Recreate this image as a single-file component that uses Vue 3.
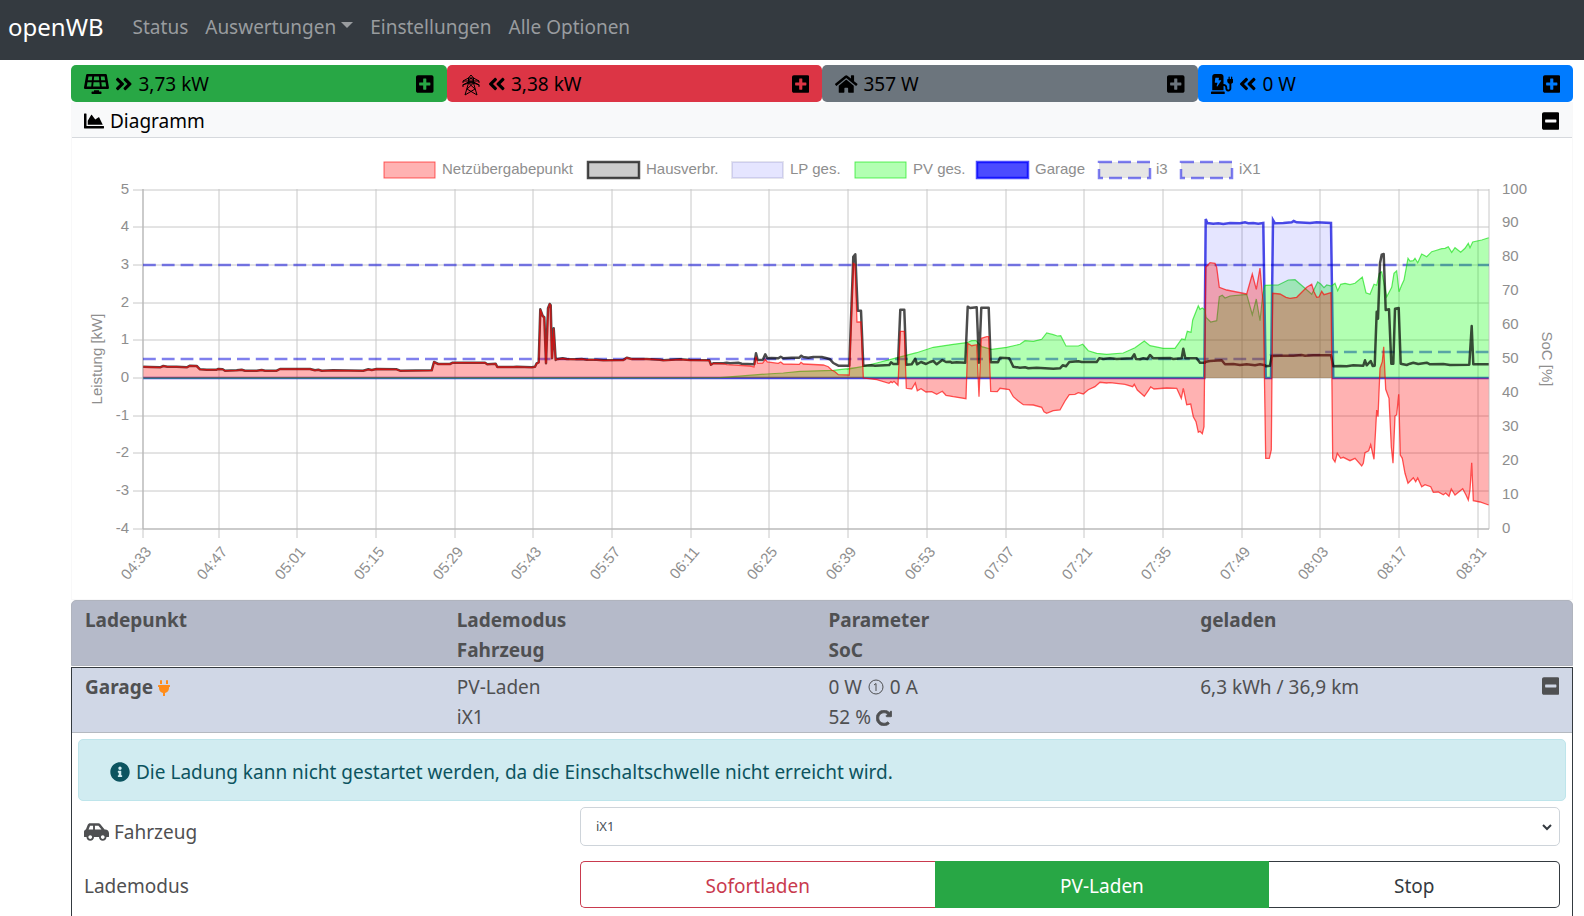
<script setup>
import { ref } from 'vue'

const vehicle = ref('iX1')
const mode = ref('pv')

const icons = {
  solar: [640, 'M431.98 448.01l-47.97.05V416h-128v32.21l-47.98.05c-8.82.01-15.97 7.16-15.98 15.99l-.05 31.73c-.01 8.85 7.17 16.03 16.02 16.02l223.96-.26c8.82-.01 15.97-7.16 15.98-15.98l.04-31.73c.01-8.85-7.17-16.03-16.02-16.02zM585.2 26.74C582.58 11.31 568.99 0 553.06 0H86.93C71 0 57.41 11.31 54.79 26.74-3.32 369.16.04 348.08.03 352c-.03 17.32 14.29 32 32.6 32h574.74c18.23 0 32.51-14.56 32.59-31.79.02-4.08 3.35 16.95-54.76-325.47zM259.83 64h120.33l9.77 96H250.06l9.77-96zm-75.17 256H71.09L90.1 208h105.97l-11.41 112zm16.16-160H98.24l16.29-96h96.19l-9.9 96zm32.82 160l11.4-112h149.91l11.4 112H233.64zm195.5-256h96.19l16.29 96H439.04l-9.9-96zm26.26 256l-11.4-112H549.9l19.01 112H455.34z'],
  chevrons: [448, 'M224.3 273l-136 136c-9.4 9.4-24.6 9.4-33.9 0l-22.6-22.6c-9.4-9.4-9.4-24.6 0-33.9l96.4-96.4-96.4-96.4c-9.4-9.4-9.4-24.6 0-33.9L54.3 103c9.4-9.4 24.6-9.4 33.9 0l136 136c9.5 9.4 9.5 24.6.1 34zm192-34l-136-136c-9.4-9.4-24.6-9.4-33.9 0l-22.6 22.6c-9.4 9.4-9.4 24.6 0 33.9l96.4 96.4-96.4 96.4c-9.4 9.4-9.4 24.6 0 33.9l22.6 22.6c9.4 9.4 24.6 9.4 33.9 0l136-136c9.4-9.2 9.4-24.4 0-33.8z'],
  plus: [448, 'M400 32H48C21.5 32 0 53.5 0 80v352c0 26.5 21.5 48 48 48h352c26.5 0 48-21.5 48-48V80c0-26.5-21.5-48-48-48zm-32 252c0 6.6-5.4 12-12 12h-92v92c0 6.6-5.4 12-12 12h-56c-6.6 0-12-5.4-12-12v-92H92c-6.6 0-12-5.4-12-12v-56c0-6.6 5.4-12 12-12h92v-92c0-6.6 5.4-12 12-12h56c6.6 0 12 5.4 12 12v92h92c6.6 0 12 5.4 12 12v56z'],
  minus: [448, 'M400 32H48C21.5 32 0 53.5 0 80v352c0 26.5 21.5 48 48 48h352c26.5 0 48-21.5 48-48V80c0-26.5-21.5-48-48-48zM92 296c-6.6 0-12-5.4-12-12v-56c0-6.6 5.4-12 12-12h264c6.6 0 12 5.4 12 12v56c0 6.6-5.4 12-12 12H92z'],
  home: [576, 'M280.37 148.26L96 300.11V464a16 16 0 0 0 16 16l112.06-.29a16 16 0 0 0 15.92-16V368a16 16 0 0 1 16-16h64a16 16 0 0 1 16 16v95.64a16 16 0 0 0 16 16.05L464 480a16 16 0 0 0 16-16V300L295.67 148.26a12.19 12.19 0 0 0-15.3 0zM571.6 251.47L488 182.56V44.05a12 12 0 0 0-12-12h-56a12 12 0 0 0-12 12v72.61L318.47 43a48 48 0 0 0-61 0L4.34 251.47a12 12 0 0 0-1.6 16.9l25.5 31A12 12 0 0 0 45.15 301l235.22-193.74a12.19 12.19 0 0 1 15.3 0L530.9 301a12 12 0 0 0 16.9-1.6l25.5-31a12 12 0 0 0-1.7-16.93z'],
  station: [576, 'M336 448H16c-8.84 0-16 7.16-16 16v32c0 8.84 7.16 16 16 16h320c8.84 0 16-7.16 16-16v-32c0-8.84-7.16-16-16-16zM544 128V80c0-8.84-7.16-16-16-16s-16 7.16-16 16v48h-32V80c0-8.84-7.16-16-16-16s-16 7.16-16 16v48h-16c-8.84 0-16 7.16-16 16v32c0 35.76 23.62 65.69 56 75.93v118.49c0 13.95-9.5 26.92-23.26 29.19C431.22 402.5 416 388.99 416 372v-28c0-48.6-39.4-88-88-88h-8V64c0-35.35-28.65-64-64-64H96C60.65 0 32 28.65 32 64v352h288V304h8c22.09 0 40 17.91 40 40v24.61c0 39.67 28.92 75.16 68.41 79.01C481.71 452.05 520 416.41 520 372V251.93c32.38-10.24 56-40.17 56-75.93v-32c0-8.84-7.16-16-16-16h-16zm-283.91 47.76l-93.7 139c-2.2 3.33-6.21 5.24-10.39 5.24-7.67 0-13.47-6.28-11.67-12.92L167.35 224H108c-7.25 0-12.85-5.59-11.89-11.89l16-107C112.9 99.9 117.98 96 124 96h68c7.88 0 13.62 6.54 11.6 13.21L192 160h57.7c9.24 0 15.01 8.78 10.39 15.76z'],
  area: [512, 'M500 384c6.6 0 12 5.4 12 12v40c0 6.6-5.4 12-12 12H12c-6.6 0-12-5.4-12-12V76c0-6.6 5.4-12 12-12h40c6.6 0 12 5.4 12 12v308h436zM372.7 159.5L288 216l-85.3-113.7c-5.1-6.8-15.5-6.3-19.9 1L96 248v104h384l-89.9-187.8c-3.2-6.5-11.4-8.7-17.4-4.7z'],
  plug: [384, 'M320,32a32,32,0,0,0-64,0v96h64Zm48,128H16A16,16,0,0,0,0,176v32a16,16,0,0,0,16,16H32v32A160.07,160.07,0,0,0,160,412.8V512h64V412.8A160.07,160.07,0,0,0,352,256V224h16a16,16,0,0,0,16-16V176A16,16,0,0,0,368,160ZM128,32a32,32,0,0,0-64,0v96h64Z'],
  info: [512, 'M256 8C119.043 8 8 119.083 8 256c0 136.997 111.043 248 248 248s248-111.003 248-248C504 119.083 392.957 8 256 8zm0 110c23.196 0 42 18.804 42 42s-18.804 42-42 42-42-18.804-42-42 18.804-42 42-42zm56 254c0 6.627-5.373 12-12 12h-88c-6.627 0-12-5.373-12-12v-24c0-6.627 5.373-12 12-12h12v-64h-12c-6.627 0-12-5.373-12-12v-24c0-6.627 5.373-12 12-12h64c6.627 0 12 5.373 12 12v100h12c6.627 0 12 5.373 12 12v24z'],
  car: [640, 'M544 192h-16L419.22 56.02A64.025 64.025 0 0 0 369.24 32H155.33c-26.17 0-49.7 15.93-59.42 40.23L48 194.26C20.44 201.4 0 226.21 0 256v112c0 8.84 7.16 16 16 16h48c0 53.02 42.98 96 96 96s96-42.98 96-96h128c0 53.02 42.98 96 96 96s96-42.98 96-96h48c8.84 0 16-7.16 16-16v-80c0-53.02-42.98-96-96-96zM160 432c-26.47 0-48-21.53-48-48s21.53-48 48-48 48 21.53 48 48-21.53 48-48 48zm72-240H116.93l38.4-96H232v96zm48 0V96h89.24l76.8 96H280zm200 240c-26.47 0-48-21.53-48-48s21.53-48 48-48 48 21.53 48 48-21.53 48-48 48z'],
  redo: [512, 'M256.455 8c66.269.119 126.437 26.233 170.859 68.685l35.715-35.715C478.149 25.851 504 36.559 504 57.941V192c0 13.255-10.745 24-24 24H345.941c-21.382 0-32.09-25.851-16.971-40.971l41.75-41.75c-30.864-28.899-70.801-44.907-113.23-45.273-92.398-.798-170.283 73.977-169.484 169.442C88.764 348.009 162.184 424 256 424c41.127 0 79.997-14.678 110.629-41.556 4.743-4.161 11.906-3.908 16.368.553l39.662 39.662c4.872 4.872 4.631 12.815-.482 17.433C378.202 479.813 319.926 504 256 504 119.034 504 8.001 392.967 8 256.002 7.999 119.193 119.646 7.755 256.455 8z'],
}

const Icon = (props) => {
  const [w, d] = icons[props.name]
  return h('svg', { viewBox: `0 0 ${w} 512`, width: (w / 512) * 20, height: 20, fill: 'currentColor', 'aria-hidden': 'true' }, [h('path', { d })])
}
Icon.props = ['name']

const tiles = [
  { key: 'pv', label: 'PV', icon: 'solar', value: '3,73 kW', arrow: 'out' },
  { key: 'grid', label: 'Netz', icon: 'pylon', value: '3,38 kW', arrow: 'in' },
  { key: 'house', label: 'Hausverbrauch', icon: 'home', value: '357 W', arrow: '' },
  { key: 'charge', label: 'Ladepunkte', icon: 'station', value: '0 W', arrow: 'in' },
]

const legend = [
  { name: 'Netzübergabepunkt', x: 384, tx: 442, fill: 'rgba(255,0,0,.3)', stroke: 'rgba(255,0,0,.6)', w: 1 },
  { name: 'Hausverbr.', x: 588, tx: 646, fill: 'rgba(0,0,0,.2)', stroke: 'rgba(0,0,0,.7)', w: 2.5 },
  { name: 'LP ges.', x: 732, tx: 790, fill: 'rgba(0,0,255,.1)', stroke: 'rgba(0,0,90,.1)', w: 2 },
  { name: 'PV ges.', x: 855, tx: 913, fill: 'rgba(0,255,0,.3)', stroke: 'rgba(0,230,0,.6)', w: 1 },
  { name: 'Garage', x: 977, tx: 1035, fill: 'rgba(0,0,255,.7)', stroke: 'rgba(0,0,255,.7)', w: 2.5 },
  { name: 'i3', x: 1099, tx: 1156, fill: 'rgba(0,0,0,.1)', stroke: 'rgba(0,0,230,.5)', w: 2.5, dash: '13 6' },
  { name: 'iX1', x: 1181, tx: 1239, fill: 'rgba(0,0,0,.1)', stroke: 'rgba(0,0,230,.5)', w: 2.5, dash: '13 6' },
]

const times = ['04:33', '04:47', '05:01', '05:15', '05:29', '05:43', '05:57', '06:11', '06:25', '06:39', '06:53', '07:07', '07:21', '07:35', '07:49', '08:03', '08:17', '08:31']
const timeTicks = times.map((label, i) => ({ label, x: i ? Math.round(218.7 + (i - 1) * 78.68) : 143 }))
const powerTicks = Array.from({ length: 10 }, (_, i) => ({ label: String(5 - i), y: Math.round(189.5 + i * 37.67) }))
const socTicks = Array.from({ length: 11 }, (_, i) => ({ label: String(100 - i * 10), y: Math.round(189.5 + i * 33.9) }))

const A = [80, 180], B = [520, 240], C = [820, 180], D = [1180, 180]
const trace = (...blocks) => blocks.map(([[ox, oy], pts]) => pts.trim().split(/\s+/).map((p) => {
  const [x, y] = p.split(',').map(Number)
  return `${(ox + x / 3).toFixed(1)},${(oy + y / 3).toFixed(1)}`
}).join(' ')).join(' ')

const nightLoad = '190,560 210,561 240,562 250,558 262,560 290,560 320,562 330,557 350,558 360,568 380,569 410,569 415,567 428,568 435,572 470,571 485,569 495,572 530,572 545,570 555,572 590,572 600,567 690,567 705,571 715,569 725,572 760,571 850,572 865,568 875,570 890,567 950,568 960,572 1055,571 1062,546 1075,552 1110,552 1118,548 1215,548 1222,553 1247,551 1252,561 1300,561 1310,560 1355,562 1365,560 1370,550 1376,547 1381,388 1388,408 1393,412 1398,550 1404,385 1409,372 1412,376 1416,535 1421,445 1427,540'
const morningLoad = '108,358 128,355 140,357 170,358 185,357 200,359 230,359 250,361 310,360 320,353 335,357 380,357 420,359 430,361 480,358 510,360 568,361 573,374 580,370'

const house = trace([A, nightLoad], [B, morningLoad + ' 610,370 620,368 630,370 655,368 665,371 700,373 703,372 708,340 713,360 728,360 736,343 742,355 755,354 775,355 782,350 790,355 815,353 838,353 843,347 850,351 865,353 880,351 905,351 920,355 930,358 940,369 955,377 988,377 1000,50 1006,43 1013,212 1023,212 1030,377'],
  [C, '130,557 155,556 165,557 208,555 213,547 220,552 234,552 241,389 253,389 259,554 275,553 286,536 291,553 303,546 318,552 330,546 340,543 350,553 367,540 378,546 390,545 395,548 410,547 436,548 443,380 450,384 470,382 477,548 484,383 506,383 512,547 534,547 540,533 568,535 580,560 600,563 615,562 625,565 650,563 700,566 720,565 728,556 738,559 748,546 775,544 785,546 830,546 838,535 850,537 870,535 890,537 935,535 943,523 948,537 960,538 970,535 982,537 990,525 1000,535 1050,534 1060,537 1085,535 1090,506 1096,535 1130,535 1140,548 1155,548'],
  [D, '75,546 90,543 125,541 135,553 160,552 180,555 200,553 225,556 240,553 255,556 258,559 270,557 275,528 300,527 340,527 365,525 375,527 400,526 453,526 460,559 480,558 500,559 520,556 550,557 555,541 560,556 572,543 578,558 584,557 590,395 594,416 600,250 605,224 611,222 617,390 627,388 634,551 640,551 645,386 656,384 662,551 680,555 690,551 700,548 715,552 740,548 750,553 790,552 810,555 868,554 875,438 880,553 926,553'])

const grid = trace([A, nightLoad], [B, morningLoad + ' 610,371 620,374 690,378 702,381 708,350 713,370 728,369 736,358 742,366 775,370 782,366 790,372 838,373 843,367 850,372 910,375 925,380 935,390 945,395 955,404 988,405 1000,70 1005,73 1011,246 1023,246 1030,412'],
  [C, '130,594 170,599 207,610 213,605 217,608 222,604 234,616 241,454 253,454 259,625 275,627 286,609 292,632 303,626 318,636 335,635 350,643 367,634 378,646 400,650 438,656 443,490 455,497 470,494 477,650 484,475 500,470 506,470 512,634 532,635 540,625 568,629 580,650 595,663 610,674 640,675 665,682 672,695 680,700 700,692 720,690 735,663 748,644 765,643 775,638 790,642 805,629 825,620 840,607 860,609 870,608 915,613 938,620 943,613 952,630 973,649 985,632 992,621 1002,627 1040,624 1070,625 1084,655 1090,625 1100,674 1112,672 1120,710 1128,725 1135,757 1140,754 1147,761 1152,740'],
  [D, '77,262 90,248 105,250 110,262 118,322 140,330 200,342 217,282 229,328 240,264 250,375 257,835 268,835 274,810 278,340 300,342 318,352 330,355 350,352 380,322 395,313 402,335 410,352 417,351 425,334 432,344 453,338 458,835 465,846 472,820 482,835 490,832 510,842 525,835 545,858 550,850 555,818 566,812 572,794 582,838 590,690 594,710 600,565 607,545 611,500 617,628 627,655 634,800 639,850 645,708 650,704 656,643 661,825 667,835 675,880 684,910 700,893 707,905 713,894 725,920 735,914 752,920 760,937 775,936 790,944 797,939 807,949 814,927 825,945 848,926 858,945 865,960 870,930 875,848 880,962 900,966 926,975'])

const pv = trace([A, '190,594'], [B, '600,413 740,402 790,399 840,394 940,391 984,386 1020,381'],
  [C, '80,568 125,560 170,549 235,532 290,518 340,502 400,493 440,488 455,482 468,482 485,500 515,508 560,502 600,493 615,482 640,484 665,478 680,459 700,464 712,468 722,467 738,498 775,498 788,493 805,512 830,520 860,523 910,519 945,503 973,483 990,497 1030,505 1065,505 1085,477 1095,479 1102,454 1113,457 1118,420 1135,377 1140,388 1147,384 1155,390'],
  [D, '78,412 92,426 110,422 118,350 127,346 135,354 150,348 200,343 217,404 229,357 240,422 248,345 255,316 295,315 325,300 345,299 375,325 395,343 413,306 422,312 432,323 440,315 455,318 465,310 473,332 482,313 495,310 510,314 525,310 547,291 558,338 570,343 582,313 590,316 598,280 605,275 620,350 635,322 642,280 650,272 657,335 665,315 672,300 684,235 690,243 700,242 705,235 713,248 725,222 740,230 755,215 765,212 785,206 795,205 805,200 815,217 825,203 842,217 855,205 865,190 870,203 878,186 905,180 926,173'])

const garage = trace([A, '190,594'], [D, '73,594 77,117 82,129 100,131 115,130 130,132 150,129 180,130 195,127 205,130 220,129 235,131 250,129 257,594 273,594 279,120 285,130 310,129 335,127 341,123 350,127 390,129 410,127 453,129 460,594 926,594'])
const closed = (line) => `143.3,378 ${line} 1488.7,378`
</script>

<script>
import { h } from 'vue'
</script>

<template>
  <nav class="navbar">
    <a class="brand" href="#">openWB</a>
    <a href="#">Status</a>
    <a href="#" class="dropdown">Auswertungen<span class="caret"></span></a>
    <a href="#">Einstellungen</a>
    <a href="#">Alle Optionen</a>
  </nav>

  <main class="page">
    <section class="tiles">
      <div v-for="t in tiles" :key="t.key" class="tile" :class="t.key">
        <svg v-if="t.icon === 'pylon'" class="pylon" viewBox="0 0 22 24" width="22" height="24" aria-hidden="true">
          <path d="M11 3L8.500 6v5L5 23M11 3l2.500 3v5L17 23M8.500 6L3 9v2M13.500 6L19 9v2M3 9h16M8.500 6h5M8.500 9L11 6l2.500 3M8.500 11L3 13v2M13.500 11L19 13v2M2.500 13L8.500 10M19.500 13L13.500 10M8.500 11h5M8.500 9l5 2M13.500 9l-5 2M8.500 11l6.500 6-10 6M13.500 11L7 17l10 6" />
        </svg>
        <Icon v-else :name="t.icon" />
        <Icon v-if="t.arrow" name="chevrons" :class="{ flip: t.arrow === 'in' }" />
        <span>{{ t.value }}</span>
        <button type="button" class="toggle" :aria-label="t.label + ' aufklappen'"><Icon name="plus" /></button>
      </div>
    </section>

    <section class="chart-card">
      <header class="chart-head">
        <Icon name="area" /><span>Diagramm</span>
        <button type="button" class="toggle" aria-label="Diagramm zuklappen"><Icon name="minus" /></button>
      </header>
      <svg class="chart" viewBox="72 138 1500 461" role="img" aria-label="Leistung und SoC">
        <g v-for="l in legend" :key="l.name">
          <rect :x="l.x" y="162" width="51" height="16" :fill="l.fill" :stroke="l.stroke" :stroke-width="l.w" :stroke-dasharray="l.dash" />
          <text :x="l.tx" y="174">{{ l.name }}</text>
        </g>

        <g class="gridlines">
          <path v-for="t in timeTicks" :key="t.label" :d="`M${t.x} 189V538`" />
          <path v-for="t in powerTicks" :key="t.label" :d="`M133 ${t.y}H1489`" />
          <path d="M1489 189V529" />
        </g>
        <path class="axis" d="M143 189V529H1489" />

        <path class="soc" d="M143 265H1489" />
        <path class="soc" d="M143 359H1265L1271 355H1319L1323 352H1489" />
        <polyline class="garage-line" :points="garage" />
        <polygon :points="closed(pv)" fill="rgba(0,255,0,.3)" />
        <polyline :points="pv" class="pv-line" />
        <polygon :points="closed(garage)" fill="rgba(0,0,255,.1)" />
        <polyline :points="house" class="house-line" />
        <polygon :points="closed(grid)" fill="rgba(255,0,0,.3)" />
        <polyline :points="grid" class="grid-line" />

        <text v-for="t in powerTicks" :key="t.label" x="129" :y="t.y + 4" text-anchor="end">{{ t.label }}</text>
        <text v-for="t in socTicks" :key="t.label" x="1502" :y="t.y + 4">{{ t.label }}</text>
        <text v-for="t in timeTicks" :key="t.label" :transform="`translate(${t.x + 9} 552) rotate(-50)`" text-anchor="end">{{ t.label }}</text>
        <text transform="translate(102 359) rotate(-90)" text-anchor="middle">Leistung [kW]</text>
        <text transform="translate(1542 359) rotate(90)" text-anchor="middle">SoC [%]</text>
      </svg>
    </section>

    <section class="points">
      <div class="columns points-head">
        <div>Ladepunkt</div>
        <div>Lademodus<br>Fahrzeug</div>
        <div>Parameter<br>SoC</div>
        <div>geladen</div>
      </div>
      <div class="point">
        <div class="columns point-head">
          <div><b>Garage</b> <Icon name="plug" class="plug" /></div>
          <div>PV-Laden<br>iX1</div>
          <div>
            0 W
            <svg class="phase" viewBox="0 0 18 16" width="18" height="16" role="img" aria-label="1 Phase"><circle cx="9" cy="8" r="7" /><path d="M7 6l2-1.500v7.500" /></svg>
            0 A<br>52 % <Icon name="redo" class="redo" />
          </div>
          <div class="loaded">
            <span>6,3 kWh / 36,9 km</span>
            <button type="button" class="toggle" aria-label="Garage zuklappen"><Icon name="minus" /></button>
          </div>
        </div>
        <div class="alert" role="status"><Icon name="info" /><span>Die Ladung kann nicht gestartet werden, da die Einschaltschwelle nicht erreicht wird.</span></div>
        <div class="form-row vehicle-row">
          <label for="vehicle"><Icon name="car" />Fahrzeug</label>
          <div class="control">
            <select id="vehicle" v-model="vehicle"><option>iX1</option><option>i3</option></select>
            <svg class="chevron" viewBox="0 0 10 8" width="10" height="8" aria-hidden="true"><path d="M1 2l4 4 4-4" /></svg>
          </div>
        </div>
        <div class="form-row">
          <span id="mode-label">Lademodus</span>
          <div class="control modes" role="group" aria-labelledby="mode-label">
            <button type="button" class="instant" :aria-pressed="mode === 'instant'" @click="mode = 'instant'">Sofortladen</button>
            <button type="button" class="sun" :aria-pressed="mode === 'pv'" @click="mode = 'pv'">PV-Laden</button>
            <button type="button" class="stop" :aria-pressed="mode === 'stop'" @click="mode = 'stop'">Stop</button>
          </div>
        </div>
      </div>
    </section>
  </main>
</template>

<style>
html, body { background: #fff; }
body { overflow: hidden; }
#app { font: 19px/30px "Noto Sans", "Open Sans", sans-serif; color: #4f5052; }
</style>

<style scoped>
* { box-sizing: border-box; }
button, select { font: inherit; }
.navbar { display: flex; align-items: center; gap: 17px; height: 60px; padding: 0 8px 6px; background: #343a40; }
.navbar a { color: #999c9f; text-decoration: none; white-space: nowrap; }
.navbar .brand { color: #fff; font-size: 24px; margin-right: 12px; }
.dropdown { display: flex; align-items: center; gap: 5px; }
.caret { border: 6px solid transparent; border-top-color: currentColor; border-bottom: 0; margin-bottom: 4px; }
.page { margin: 5px 11px 0 71px; }
.tiles { display: grid; grid-template-columns: repeat(4, 1fr); }
.tile { display: flex; align-items: center; gap: 6px; height: 37px; padding: 0 13px; border-radius: 5px; color: #000; }
.tile svg, .chart-head svg { flex: none; }
.pv { background: #28a745; }
.grid { background: #dc3545; }
.house { background: #6c757d; }
.charge { background: #007bff; }
.pylon { fill: none; stroke: #000; stroke-width: 1; }
.flip { transform: scaleX(-1); }
.toggle { display: flex; margin-left: auto; padding: 0; border: 0; background: none; color: inherit; cursor: pointer; }
.chart-card { border: 1px solid #f8f8f9; border-top: 0; }
.chart-head { display: flex; align-items: center; gap: 6px; height: 36px; padding: 2px 13px 0 12px; background: #f8f9fa; border-bottom: 1px solid #d6d9dd; color: #000; }
.chart { display: block; width: 100%; }
.chart text { font: 15px "Liberation Sans", Arial, sans-serif; fill: #8e8e8e; }
.chart path, .chart polyline { fill: none; }
.gridlines { stroke: #c8c8c8; stroke-width: 1; }
.axis { stroke: #b3b3b3; stroke-width: 1; }
.soc { stroke: rgba(0, 0, 220, .5); stroke-width: 2.5; stroke-dasharray: 12.8 6; }
.garage-line { stroke: rgba(0, 0, 220, .7); stroke-width: 2.5; }
.pv-line { stroke: rgba(0, 220, 0, .6); stroke-width: 1.2; }
.house-line { stroke: rgba(0, 0, 0, .7); stroke-width: 2.5; stroke-linejoin: round; }
.grid-line { stroke: rgba(255, 0, 0, .65); stroke-width: 1.3; }
.columns { display: grid; grid-template-columns: repeat(4, 1fr); padding-left: 13px; }
.points-head { height: 66px; padding-top: 4px; background: #b5bac9; border: 1px solid #b0b4be; border-radius: 5px 5px 0 0; font-weight: bold; }
.point { margin-top: 1px; padding-bottom: 40px; border: 1px solid #343a40; border-bottom: 0; }
.point-head { height: 65px; padding-top: 4px; background: #d0d7e6; border-bottom: 1px solid #b4b9c0; }
.plug { color: #ff8c1a; width: 12px; height: 16px; vertical-align: -2px; }
.phase { fill: none; stroke: currentColor; stroke-width: 1; vertical-align: -1px; }
.redo { width: 16px; height: 16px; vertical-align: -2px; stroke: currentColor; stroke-width: 24; }
.loaded { display: flex; align-items: flex-start; padding-right: 13px; }
.loaded .toggle { margin-top: 4px; }
.alert { display: flex; align-items: center; gap: 6px; height: 62px; margin: 6px 6px 4px; padding: 4px 31px 0; background: #d1ecf1; border: 1px solid #bee5eb; border-radius: 5px; color: #0c5460; }
.form-row { display: grid; grid-template-columns: 1fr 2fr; align-items: center; padding-left: 12px; }
.vehicle-row { margin-bottom: 14px; }
label { display: flex; align-items: center; gap: 5px; padding-top: 12px; }
#mode-label { padding-top: 2px; }
.control { position: relative; padding-right: 12px; }
select { display: block; width: 100%; height: 39px; padding: 0 15px; border: 1px solid #ced4da; border-radius: 5px; background: #fff; color: #495057; font-size: 13px; appearance: none; }
.chevron { position: absolute; right: 20px; top: 16px; fill: none; stroke: #343a40; stroke-width: 2; pointer-events: none; }
.modes { display: flex; }
.modes button { flex: 1 1 auto; height: 47px; padding: 2px 16px 0; border: 1px solid; background: #fff; }
.modes .instant { color: #c93a4e; border-right: 0; border-radius: 5px 0 0 5px; }
.modes .sun { color: #fff; background: #28a745; border-color: #28a745; }
.modes .stop { color: #343a40; border-left: 0; border-radius: 0 5px 5px 0; }
</style>
